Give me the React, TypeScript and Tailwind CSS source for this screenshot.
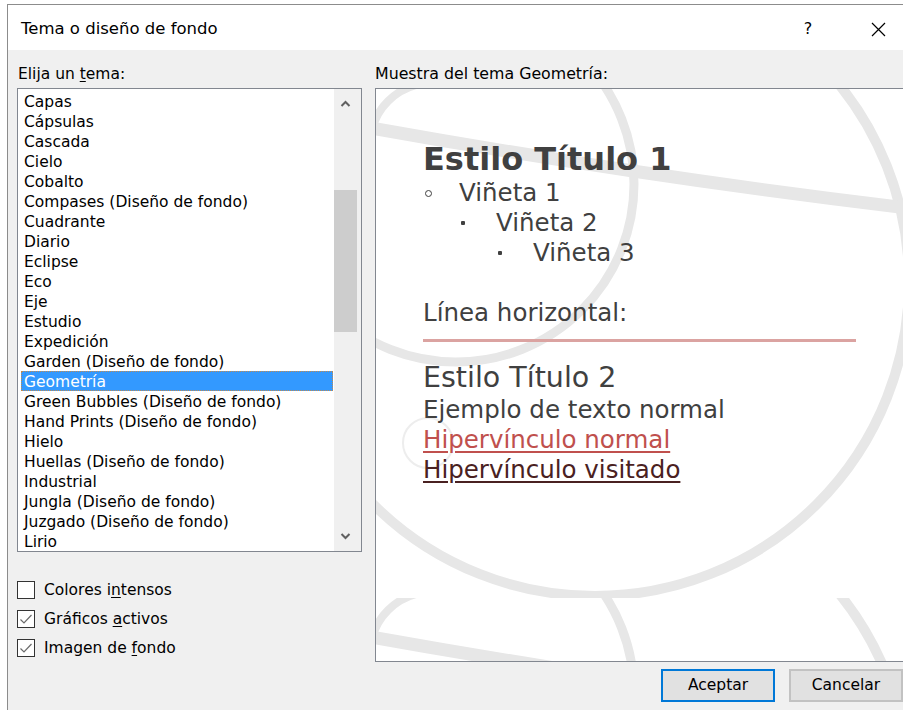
import type { ReactNode } from "react";

const THEMES = [
  "Capas",
  "Cápsulas",
  "Cascada",
  "Cielo",
  "Cobalto",
  "Compases (Diseño de fondo)",
  "Cuadrante",
  "Diario",
  "Eclipse",
  "Eco",
  "Eje",
  "Estudio",
  "Expedición",
  "Garden (Diseño de fondo)",
  "Geometría",
  "Green Bubbles (Diseño de fondo)",
  "Hand Prints (Diseño de fondo)",
  "Hielo",
  "Huellas (Diseño de fondo)",
  "Industrial",
  "Jungla (Diseño de fondo)",
  "Juzgado (Diseño de fondo)",
  "Lirio",
];

const SELECTED = "Geometría";

// access-key letter
function Key({ children }: { children: ReactNode }) {
  return <span className="underline underline-offset-[2px]">{children}</span>;
}

function Chevron({ down }: { down?: boolean }) {
  return (
    <svg width="11" height="8" viewBox="0 0 11 8">
      <polyline
        points={down ? "1.5,2 5.5,6 9.5,2" : "1.5,6 5.5,2 9.5,6"}
        fill="none"
        stroke="#606060"
        strokeWidth="2"
      />
    </svg>
  );
}

function Check({ checked, children }: { checked?: boolean; children: ReactNode }) {
  return (
    <div className="flex h-[29px] items-center gap-[9px]">
      <span className="flex h-[18px] w-[18px] items-center justify-center border border-[#333333] bg-white">
        {checked && (
          <svg width="14" height="14" viewBox="0 0 14 14">
            <polyline points="1.5,7.5 5,11 12.5,3" fill="none" stroke="#6b6b6b" strokeWidth="1.2" />
          </svg>
        )}
      </span>
      <span className="text-[15.5px] leading-[20px]">{children}</span>
    </div>
  );
}

function Bullet({ level, children }: { level: number; children: ReactNode }) {
  const indent = ["pl-0", "pl-[37px]", "pl-[74px]"][level];
  return (
    <div className={`flex h-[30px] items-center ${indent}`}>
      <span className="flex w-[36px] items-center">
        {level === 0 ? (
          <span className="ml-[2px] h-[7px] w-[7px] rounded-full border-[1.5px] border-[#404040]" />
        ) : (
          <span className="ml-[1px] h-[4px] w-[4px] rounded-[1px] bg-[#404040]" />
        )}
      </span>
      <span className="text-[24.5px] leading-[30px]">{children}</span>
    </div>
  );
}

// the Geometría background: light arcs, tiled vertically
function GeoBackdrop() {
  return (
    <svg className="absolute inset-0" width="530" height="572" viewBox="0 0 530 572">
      <defs>
        <clipPath id="tile">
          <rect x="0" y="0" width="530" height="509" />
        </clipPath>
        <g id="geo" fill="none" stroke="#e7e7e7">
          <circle cx="219" cy="193" r="314" strokeWidth="10" />
          <circle cx="80" cy="95" r="178" strokeWidth="9" />
          <path d="M -10 38 Q 268 88 540 120" strokeWidth="13" />
          <path d="M -4 40 A 62 62 0 0 1 40 -4" strokeWidth="8" />
          <circle cx="52" cy="354" r="25" strokeWidth="2" stroke="#ededed" />
        </g>
      </defs>
      <g clipPath="url(#tile)">
        <use href="#geo" />
      </g>
      <g transform="translate(0 509)">
        <g clipPath="url(#tile)">
          <use href="#geo" />
        </g>
      </g>
    </svg>
  );
}

export default function App() {
  return (
    <div className="h-[710px] w-[903px] overflow-hidden bg-white font-['DejaVu_Sans',sans-serif] text-black">
      <div className="ml-[7px] mt-[4px] flex h-[720px] w-[910px] flex-col border border-[#8c8c8c] bg-[#f0f0f0]">
        {/* title bar */}
        <div className="flex h-[45px] shrink-0 items-center bg-white pl-[13px] pr-[3px] pt-[3px]">
          <div className="flex-1 text-[16.5px]">Tema o diseño de fondo</div>
          <div className="w-[70px] text-center text-[16px]">?</div>
          <div className="flex w-[70px] justify-center">
            <svg width="15" height="15" viewBox="0 0 15 15">
              <path d="M1 1 L14 14 M14 1 L1 14" stroke="#000" strokeWidth="1.2" />
            </svg>
          </div>
        </div>

        <div className="flex flex-1 gap-[13px] pl-[9px] pr-[11px] pt-[14px]">
          {/* theme list */}
          <div className="flex w-[345px] shrink-0 flex-col">
            <div className="h-[20px] pl-[1px] text-[15.5px] leading-[20px]">
              Elija un <Key>t</Key>ema:
            </div>
            <div className="mt-[4px] flex h-[464px] border border-[#828790] bg-white">
              <div className="flex w-[316px] flex-col pl-[3px] pr-[1px] pt-[2px]">
                {THEMES.map((t) => (
                  <div
                    key={t}
                    className={`h-[20px] border px-[2px] pt-[2px] text-[15.5px] leading-[17px] whitespace-nowrap ${
                      t === SELECTED
                        ? "border-dotted border-[#c08a50] bg-[#3399ff] text-white"
                        : "border-transparent"
                    }`}
                  >
                    {t}
                  </div>
                ))}
              </div>
              <div className="flex w-[27px] flex-col bg-[#f0f0f0]">
                <div className="flex h-[30px] w-[23px] items-center justify-center">
                  <Chevron />
                </div>
                <div className="h-[71px]" />
                <div className="h-[142px] w-[23px] bg-[#cdcdcd]" />
                <div className="flex-1" />
                <div className="flex h-[30px] w-[23px] items-center justify-center">
                  <Chevron down />
                </div>
              </div>
            </div>
            <div className="mt-[23px] flex flex-col">
              <Check>
                Colores i<Key>n</Key>tensos
              </Check>
              <Check checked>
                Gráficos <Key>a</Key>ctivos
              </Check>
              <Check checked>
                Imagen de <Key>f</Key>ondo
              </Check>
            </div>
          </div>

          {/* preview */}
          <div className="flex flex-1 flex-col">
            <div className="h-[20px] text-[15.8px] leading-[20px]">Muestra del tema Geometría:</div>
            <div className="relative mt-[4px] h-[574px] overflow-hidden border border-[#828790] bg-white">
              <GeoBackdrop />
              <div className="relative pl-[47px] pt-[51px] text-[#404040]">
                <div className="text-[32px] leading-[38px] font-bold">Estilo Título 1</div>
                <Bullet level={0}>Viñeta 1</Bullet>
                <Bullet level={1}>Viñeta 2</Bullet>
                <Bullet level={2}>Viñeta 3</Bullet>
                <div className="mt-[30px] text-[24.5px] leading-[30px]">Línea horizontal:</div>
                <div className="mt-[11px] h-[3px] w-[433px] bg-[#dba3a1]" />
                <div className="mt-[20px] text-[28.5px] leading-[32px]">Estilo Título 2</div>
                <div className="mt-[1px] text-[24.5px] leading-[30px]">Ejemplo de texto normal</div>
                <div className="text-[24.5px] leading-[30px]">
                  <span className="text-[#c0504d] underline decoration-[1.5px] underline-offset-[3px]">
                    Hipervínculo normal
                  </span>
                </div>
                <div className="text-[24.5px] leading-[30px]">
                  <span className="text-[#4a2121] underline decoration-[1.5px] underline-offset-[3px]">
                    Hipervínculo visitado
                  </span>
                </div>
              </div>
            </div>
            <div className="mt-[7px] flex justify-end gap-[14px] pr-[2px]">
              <button className="h-[33px] w-[114px] border-2 border-[#0078d7] bg-[#e1e1e1] text-[15.5px]">
                Aceptar
              </button>
              <button className="h-[33px] w-[114px] border-2 border-[#c2c2c2] bg-[#e1e1e1] text-[15.5px]">
                Cancelar
              </button>
            </div>
          </div>
        </div>
      </div>
    </div>
  );
}
